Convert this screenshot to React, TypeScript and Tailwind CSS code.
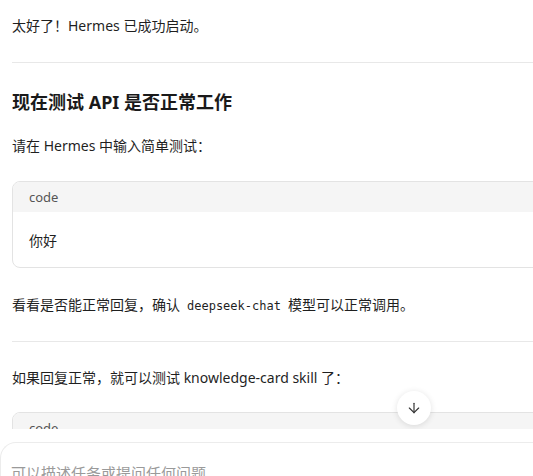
import { ArrowDown } from "lucide-react";

function CodeBlock({ children }: { children?: React.ReactNode }) {
  return (
    <div className="rounded-lg border border-[#e3e3e3] overflow-hidden">
      <div className="h-[30px] bg-[#f5f5f5] px-4 flex items-center text-[13px] text-[#555]">code</div>
      <div className="px-4 pt-[18px] pb-[15px] text-[14px] leading-[22px] text-[#1f1f1f] min-h-[55px]">
        {children}
      </div>
    </div>
  );
}

export default function App() {
  return (
    <div
      className="h-[476px] w-full bg-white flex flex-col overflow-hidden"
      style={{ fontFamily: '"Noto Sans", "Noto Sans CJK SC", sans-serif' }}
    >
      <div className="relative h-[429px] shrink-0 overflow-hidden">
        <div className="w-[600px] pl-3 text-[14px] leading-[22px] text-[#1f1f1f]">
          <p className="mt-[15px] h-[22px]">太好了！Hermes 已成功启动。</p>
          <hr className="mt-[25px] border-0 border-t border-[#e8e8e8]" />
          <h2 className="mt-[26px] h-[26px] text-[18px] leading-[26px] font-bold text-[#1a1a1a]">
            现在测试 API 是否正常工作
          </h2>
          <p className="mt-[20px] h-[22px]">请在 Hermes 中输入简单测试：</p>
          <div className="mt-[24px]">
            <CodeBlock>你好</CodeBlock>
          </div>
          <p className="mt-[26px] h-[22px]">
            看看是否能正常回复，确认
            <code
              className="mx-[3px] px-1 text-[12px] leading-none"
              style={{ fontFamily: '"DejaVu Sans Mono", monospace' }}
            >
              deepseek-chat
            </code>
            模型可以正常调用。
          </p>
          <hr className="mt-[25px] border-0 border-t border-[#e8e8e8]" />
          <p className="mt-[25px] h-[22px]">如果回复正常，就可以测试 knowledge-card skill 了：</p>
          <div className="mt-[23px]">
            <CodeBlock>/knowledge-card</CodeBlock>
          </div>
        </div>

        <button className="absolute left-[397px] top-[391px] w-[34px] h-[34px] rounded-full bg-white shadow-[0_1px_6px_rgba(0,0,0,0.12)] flex items-center justify-center text-[#333]">
          <ArrowDown size={16} strokeWidth={1.75} />
        </button>
      </div>

      <div className="flex-1 pt-[13px]">
        <div className="h-full rounded-tl-2xl border-t border-l border-[#ececec] pl-[10px] pt-[19px]">
          <p className="text-[15px] leading-[22px] text-[#9a9a9a]">可以描述任务或提问任何问题</p>
        </div>
      </div>
    </div>
  );
}
